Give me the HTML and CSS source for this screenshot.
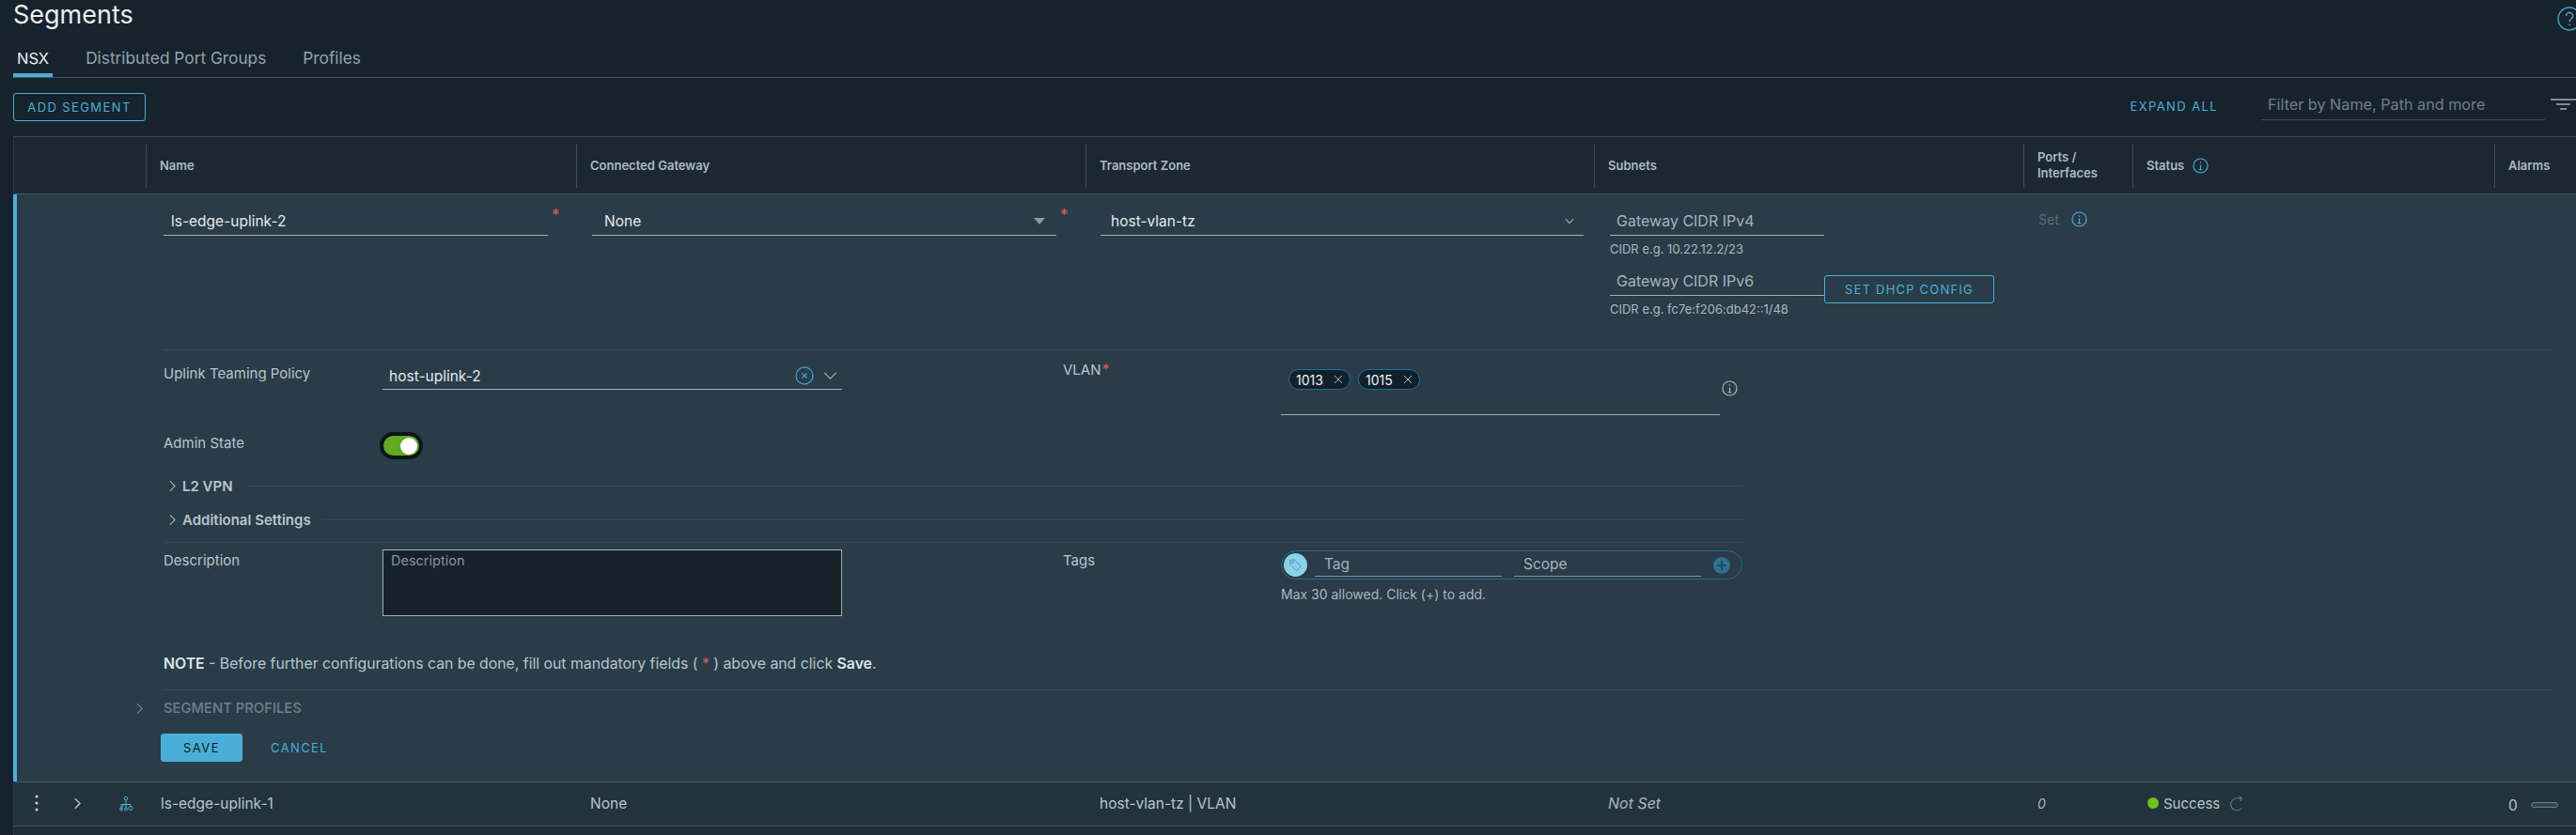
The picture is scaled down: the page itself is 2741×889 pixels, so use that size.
FILE: index.html
```html
<!DOCTYPE html>
<html lang="en">
<head>
  <meta charset="UTF-8" />
  <title>Segments</title>
  <link rel="stylesheet" href="styles.css">
</head>
<body>
  <div class="page-head">
    <h1>Segments</h1>
    <svg class="help-icon" viewBox="0 0 26 26"><circle cx="13" cy="13" r="12"/><path d="M9.5 10a3.6 3.6 0 1 1 5.6 3c-1.4.9-2.1 1.5-2.1 3.2M13 18.5v1.8"/></svg>
  </div>

  <nav class="tabs">
    <a class="tab active">NSX</a>
    <a class="tab">Distributed Port Groups</a>
    <a class="tab">Profiles</a>
  </nav>

  <div class="toolbar">
    <button class="btn btn-outline">ADD SEGMENT</button>
    <a class="link-btn expand">EXPAND ALL</a>
    <div class="filter">Filter by Name, Path and more</div>
    <svg class="filter-icon" viewBox="0 0 27 12"><path d="M0 1h27M6 6h15M10 11h7"/></svg>
  </div>

  <div class="grid-table">
    <div class="cols head">
      <div class="cell"></div>
      <div class="cell">Name</div>
      <div class="cell">Connected Gateway</div>
      <div class="cell">Transport Zone</div>
      <div class="cell">Subnets</div>
      <div class="cell">Ports /<br>Interfaces</div>
      <div class="cell">Status
        <svg class="info blue" viewBox="0 0 18 18"><circle cx="9" cy="9" r="8"/><path d="M9 8v5M7 13.5h4M9 4.5V6"/></svg>
      </div>
      <div class="cell">Alarms</div>
    </div>

    <div class="edit-row">
      <section class="edit-top">
        <div class="top-cell">
          <div class="field name-field"><span class="value">ls-edge-uplink-2</span></div>
          <span class="req">*</span>
        </div>
        <div class="top-cell">
          <div class="field gateway-field"><span class="value">None</span><i class="caret"></i></div>
          <span class="req">*</span>
        </div>
        <div class="top-cell">
          <div class="field zone-field"><span class="value">host-vlan-tz</span>
            <svg class="chev-down" viewBox="0 0 12 8"><path d="M1 1l5 5.5L11 1"/></svg>
          </div>
        </div>
        <div class="subnets">
          <div class="field cidr-field"><span class="placeholder">Gateway CIDR IPv4</span></div>
          <p class="help">CIDR e.g. 10.22.12.2/23</p>
          <div class="cidr-row">
            <div class="field cidr-field"><span class="placeholder">Gateway CIDR IPv6</span></div>
            <button class="btn btn-outline btn-dhcp">SET DHCP CONFIG</button>
          </div>
          <p class="help">CIDR e.g. fc7e:f206:db42::1/48</p>
        </div>
        <div class="ports">
          <span class="muted">Set</span>
          <svg class="info blue" viewBox="0 0 18 18"><circle cx="9" cy="9" r="8"/><path d="M9 8v5M7 13.5h4M9 4.5V6"/></svg>
        </div>
      </section>

      <section class="edit-form">
        <div class="form-row uplink-row">
          <label class="form-label">Uplink Teaming Policy</label>
          <div class="field policy-field"><span class="value">host-uplink-2</span>
            <svg class="clear-icon" viewBox="0 0 20 20"><circle cx="10" cy="10" r="9"/><path d="M7.5 7.5l5 5M12.5 7.5l-5 5"/></svg>
            <svg class="chev-down wide" viewBox="0 0 16 9"><path d="M1 1l7 7 7-7"/></svg>
          </div>
          <label class="form-label vlan-label">VLAN<span class="req inline">*</span></label>
          <div class="vlan-box">
            <div class="chips">
              <span class="chip">1013<svg viewBox="0 0 10 10"><path d="M1 1l8 8M9 1l-8 8"/></svg></span>
              <span class="chip">1015<svg viewBox="0 0 10 10"><path d="M1 1l8 8M9 1l-8 8"/></svg></span>
            </div>
            <svg class="info grey" viewBox="0 0 18 18"><circle cx="9" cy="9" r="8"/><path d="M9 8v5M7 13.5h4M9 4.5V6"/></svg>
          </div>
        </div>

        <div class="form-row admin-row">
          <label class="form-label">Admin State</label>
          <div class="toggle"><i></i></div>
        </div>

        <div class="collapse-row first">
          <svg class="chev-right" viewBox="0 0 8 14"><path d="M1 1l6 6-6 6"/></svg>
          <span>L2 VPN</span><i></i>
        </div>
        <div class="collapse-row">
          <svg class="chev-right" viewBox="0 0 8 14"><path d="M1 1l6 6-6 6"/></svg>
          <span>Additional Settings</span><i></i>
        </div>

        <div class="form-row desc-row">
          <label class="form-label">Description</label>
          <div class="textarea">Description</div>
          <label class="form-label">Tags</label>
          <div>
            <div class="tag-pill">
              <span class="tag-circle">
                <svg viewBox="0 0 16 16"><path d="M2 2.5l5-.5 7 7.5-5 5-7-7z"/><circle cx="5" cy="5" r="1"/></svg>
              </span>
              <div class="tag-input">Tag</div>
              <div class="tag-input">Scope</div>
              <span class="tag-add">
                <svg viewBox="0 0 10 10"><path d="M5 0v10M0 5h10"/></svg>
              </span>
            </div>
            <p class="help tag-help">Max 30 allowed. Click (+) to add.</p>
          </div>
        </div>
      </section>

      <p class="note"><b>NOTE</b> - Before further configurations can be done, fill out mandatory fields ( <span class="req-dot">*</span> ) above and click <b>Save</b>.</p>

      <div class="profiles">
        <svg class="chev-right dim" viewBox="0 0 8 14"><path d="M1 1l6 6-6 6"/></svg>
        <span>SEGMENT PROFILES</span>
      </div>

      <div class="actions">
        <button class="btn btn-solid">SAVE</button>
        <a class="link-btn">CANCEL</a>
      </div>
    </div>

    <div class="cols data">
      <div class="cell row-tools">
        <svg class="kebab" viewBox="0 0 4 18"><circle cx="2" cy="2" r="1.5"/><circle cx="2" cy="9" r="1.5"/><circle cx="2" cy="16" r="1.5"/></svg>
        <svg class="chev-right" viewBox="0 0 8 14"><path d="M1 1l6 6-6 6"/></svg>
        <svg class="segment-icon" viewBox="0 0 16 16"><circle cx="8" cy="2.5" r="1.8"/><path d="M8 4.5V8M3 14V9h10v2M6 8l-3 6M8 8v6"/><circle cx="3" cy="14" r="1.5"/><circle cx="8" cy="14" r="1.5"/><circle cx="13" cy="13" r="2"/></svg>
      </div>
      <div class="cell name-cell">ls-edge-uplink-1</div>
      <div class="cell">None</div>
      <div class="cell">host-vlan-tz | VLAN</div>
      <div class="cell"><em class="not-set">Not Set</em></div>
      <div class="cell"><em>0</em></div>
      <div class="cell status-cell">
        <i class="dot"></i>Success
        <svg class="refresh" viewBox="0 0 16 18"><path d="M13 14.5A7 7 0 1 1 9 3h4M10.5.5L13 3l-1 3.5"/></svg>
      </div>
      <div class="cell alarm-cell"><span>0</span><i class="alarm-bar"></i></div>
    </div>
    <div class="table-rest"></div>
  </div>
</body>
</html>
```

FILE: styles.css
```css
html, body {
  margin: 0;
  height: 889px;
  overflow: hidden;
}
body {
  width: 2741px;
  background: #17232c;
  color: #c5d0d7;
  font-family: Inter, "Liberation Sans", sans-serif;
  font-size: 14px;
}
p { margin: 0; }
svg { fill: none; stroke: currentColor; display: block; flex: none; }

.page-head {
  height: 48px;
  padding-left: 14px;
  display: flex;
  justify-content: space-between;
}
h1 {
  margin: 0;
  font-size: 27px;
  line-height: 32px;
  font-weight: 400;
  color: #e9eef0;
}
.help-icon {
  width: 26px;
  height: 26px;
  margin: 7px -6px 0 0;
  color: #3d9fcb;
  stroke-width: 1.5;
}

.tabs {
  display: flex;
  gap: 39px;
  height: 34px;
  margin-left: 14px;
  padding-left: 4px;
  border-bottom: 1px solid #44545f;
}
.tab {
  line-height: 28px;
  font-size: 17.3px;
  color: #93a4af;
}
.tab.active {
  color: #e9eef0;
  position: relative;
  font-size: 16.5px;
}
.tab.active::after {
  content: "";
  position: absolute;
  left: -4px;
  right: -4px;
  bottom: 0;
  height: 4px;
  background: #49afd9;
}

.toolbar {
  height: 62px;
  padding-left: 14px;
  display: flex;
  align-items: center;
  box-sizing: border-box;
}
.btn {
  font-family: inherit;
  font-size: 13px;
  letter-spacing: 1.4px;
  border-radius: 3px;
  padding: 0;
}
.btn-outline {
  width: 141px;
  height: 30px;
  margin-top: -1px;
  background: transparent;
  border: 1px solid #49afd9;
  color: #49afd9;
}
.link-btn {
  color: #49afd9;
  font-size: 13px;
  letter-spacing: 1.4px;
}
.expand { margin-left: auto; margin-top: -3px; }
.filter {
  width: 295px;
  margin-left: 46px;
  padding: 0 0 6px 7px;
  border-bottom: 1px solid #3b4953;
  color: #6f7f8a;
  font-size: 16.2px;
  line-height: 20px;
}
.filter-icon {
  width: 27px;
  height: 12px;
  margin: -6px 0 0 6px;
  color: #7d8b94;
  stroke-width: 2;
}

.grid-table {
  margin-left: 14px;
  width: 2760px;
  border-top: 1px solid #3a4953;
  border-left: 1px solid #2e3c46;
}
.cols {
  display: grid;
  grid-template-columns: 140px 458px 542px 541px 457px 116px 385px 1fr;
}
.head {
  height: 60px;
  background: #1b2832;
  border-bottom: 1px solid #4a5b67;
  align-items: center;
  font-size: 13px;
  font-weight: 600;
  color: #acbac3;
}
.head .cell {
  height: 47px;
  padding-left: 14px;
  border-left: 1px solid #3f4e59;
  display: flex;
  align-items: center;
  gap: 9px;
  line-height: 17px;
  box-sizing: border-box;
}
.head .cell:first-child { border-left: 0; }
.info {
  width: 17px;
  height: 19px;
  stroke-width: 1.2;
}
.info.blue { color: #49afd9; }
.info.grey { color: #adbbc4; }

.edit-row {
  height: 625px;
  background: #293c48;
  border-left: 4px solid #49afd9;
  margin-left: -1px;
  padding-left: 156px;
  box-sizing: border-box;
}
.edit-top {
  width: 2543px;
  height: 165px;
  display: grid;
  grid-template-columns: 456px 541px 542px 456px 1fr;
  border-bottom: 1px solid #344855;
}
.top-cell {
  display: flex;
  align-items: flex-start;
  padding-top: 19px;
}
.field {
  height: 18px;
  padding-bottom: 6px;
  border-bottom: 1px solid #9fb0ba;
  display: flex;
  align-items: center;
  font-size: 15.5px;
}
.value {
  color: #e3e9ec;
  padding-left: 8px;
}
.placeholder {
  color: #a5b3bb;
  padding-left: 7px;
  font-size: 16px;
}
.req {
  color: #e05a55;
  font-size: 17px;
  line-height: 16px;
  margin: -5px 0 0 4px;
}
.name-field { width: 409px; }
.gateway-field { width: 489px; padding-left: 5px; }
.caret {
  margin-left: auto;
  margin-right: 12px;
  border: 6px solid transparent;
  border-top: 7px solid #8d9aa2;
  border-bottom: 0;
}
.zone-field { width: 511px; padding-left: 3px; }
.chev-down {
  width: 10px;
  height: 7px;
  margin-left: auto;
  margin-right: 10px;
  color: #a5b3bb;
  stroke-width: 1.3;
}
.subnets { padding-top: 19px; }
.cidr-field { width: 228px; }
.help {
  font-size: 13px;
  line-height: 18px;
  color: #a9b7c0;
}
.subnets .help { margin-top: 5px; }
.cidr-row {
  display: flex;
  align-items: flex-end;
  margin-top: 16px;
  height: 25px;
}
.btn-dhcp {
  width: 181px;
  height: 30px;
  margin: 0 0 -8px 0;
  letter-spacing: 1.2px;
}
.subnets .cidr-row + .help { margin-top: 5px; }
.ports {
  display: flex;
  gap: 13px;
  padding-top: 16px;
  height: 20px;
  align-items: center;
}
.muted { color: #5b6e7a; }

.edit-form { width: 1680px; }
.form-row {
  display: grid;
  grid-template-columns: 233px 724px 232px 491px;
}
.form-label {
  color: #b8c5cc;
  font-size: 15px;
  line-height: 18px;
}
.uplink-row {
  height: 72px;
  padding-top: 16px;
  box-sizing: border-box;
}
.policy-field {
  width: 489px;
  height: 22px;
  padding-bottom: 3px;
}
.policy-field .value { padding-left: 7px; }
.clear-icon {
  width: 20px;
  height: 20px;
  margin-left: auto;
  color: #3d9fcb;
  stroke-width: 1.3;
}
.chev-down.wide {
  width: 15px;
  height: 8px;
  margin: 0 5px 0 10px;
}
.vlan-label { margin-top: -4px; }
.req.inline {
  margin: 0 0 0 1px;
  font-size: 16px;
  line-height: 10px;
}
.vlan-box {
  width: 467px;
  height: 53px;
  border-bottom: 1px solid #9fb0ba;
  display: flex;
  box-sizing: border-box;
  position: relative;
}
.chips {
  display: flex;
  gap: 8px;
  padding: 4px 0 0 8px;
  align-items: flex-start;
}
.chip {
  width: 66px;
  height: 22px;
  padding: 0 7px;
  display: flex;
  align-items: center;
  justify-content: space-between;
  box-sizing: border-box;
  background: #12202b;
  border: 1.5px solid #1670a3;
  border-radius: 11px;
  color: #eef2f4;
  font-size: 14px;
}
.chip svg {
  width: 10px;
  height: 10px;
  color: #a5b9c5;
}
.vlan-box .info {
  position: absolute;
  left: 469px;
  top: 15px;
}

.admin-row {
  height: 64px;
  padding-top: 18px;
  box-sizing: border-box;
}
.toggle {
  width: 38px;
  height: 21px;
  margin: -3px 0 0 -3px;
  background: #60ab21;
  border: 4px solid #0d1518;
  border-radius: 15px;
  display: flex;
  justify-content: flex-end;
  align-items: center;
}
.toggle i {
  width: 18px;
  height: 18px;
  margin-right: 2px;
  background: #fff;
  border-radius: 50%;
}
.collapse-row {
  height: 36px;
  display: flex;
  align-items: center;
  padding-left: 6px;
  gap: 7px;
  color: #b8c5cc;
  font-weight: 600;
  font-size: 15px;
}
.collapse-row.first { height: 35px; margin-top: -9px; }
.collapse-row + .collapse-row { margin-bottom: 22px; }
.collapse-row i {
  flex: 1;
  height: 1px;
  margin-left: 6px;
  background: #344855;
}
.chev-right {
  width: 7px;
  height: 13px;
  color: #b8c5cc;
  stroke-width: 1.2;
}
.desc-row {
  border-top: 1px solid #344855;
  margin-top: -16px;
  padding-top: 7px;
}
.desc-row .form-label { margin-top: 3px; }
.textarea {
  width: 489px;
  height: 71px;
  box-sizing: border-box;
  padding: 2px 8px;
  background: #16222a;
  border: 1px solid #a0afb8;
  color: #84949e;
  font-size: 14.5px;
}
.tag-pill {
  width: 491px;
  height: 31px;
  margin-top: 1px;
  padding: 0 8px 0 2px;
  display: flex;
  align-items: center;
  box-sizing: border-box;
  border: 1px solid #2e6785;
  border-radius: 16px;
}
.tag-circle {
  width: 25px;
  height: 25px;
  margin-right: 8px;
  border-radius: 50%;
  background: #89d3e8;
  display: flex;
  align-items: center;
  justify-content: center;
  color: #4d93ad;
}
.tag-circle svg { width: 15px; height: 15px; }
.tag-input {
  width: 199px;
  height: 24px;
  margin-right: 13px;
  padding-left: 10px;
  box-sizing: border-box;
  border-bottom: 1px solid #8494a0;
  color: #a5b3bb;
  font-size: 15.5px;
  line-height: 21px;
}
.tag-add {
  width: 18px;
  height: 18px;
  border-radius: 50%;
  background: #2e7091;
  display: flex;
  align-items: center;
  justify-content: center;
  color: #234a5e;
}
.tag-add svg { width: 10px; height: 10px; stroke-width: 2; }
.tag-help { margin-top: 7px; font-size: 14px; }

.note {
  width: 2543px;
  margin-top: 42px;
  padding-bottom: 18px;
  border-bottom: 1px solid #344855;
  line-height: 18px;
  font-size: 15.8px;
  color: #b8c5cc;
}
.note b { color: #dde4e8; font-weight: 600; }
.req-dot { color: #e05a55; }
.profiles {
  display: flex;
  align-items: center;
  height: 30px;
  margin-top: 4px;
  margin-left: -29px;
  gap: 22px;
  color: #6d808c;
  font-size: 14.8px;
  font-weight: 500;
}
.chev-right.dim { color: #7f919d; }
.actions {
  display: flex;
  align-items: center;
  gap: 30px;
  margin: 12px 0 0 -3px;
}
.btn-solid {
  width: 87px;
  height: 30px;
  background: #49afd9;
  border: 1px solid #49afd9;
  color: #0b1a22;
}

.data {
  height: 48px;
  background: #22333b;
  border-top: 1px solid #4a5b67;
  border-bottom: 1px solid #3f4e59;
  align-items: center;
  box-sizing: border-box;
  color: #b8c5cc;
  font-size: 15.5px;
}
.data .cell { padding-left: 15px; margin-top: -2px; }
.data .name-cell { padding-left: 16px; }
.data em { font-style: italic; color: #a9b7c0; font-size: 14px; }
.data em.not-set { font-size: 16px; }
.row-tools {
  display: flex;
  align-items: center;
  padding-left: 22px !important;
}
.kebab {
  width: 4px;
  height: 18px;
  fill: #c5d0d7;
  stroke: none;
}
.row-tools .chev-right { margin-left: 38px; stroke-width: 1.6; }
.segment-icon {
  width: 16px;
  height: 17px;
  margin-left: 40px;
  color: #49afd9;
}
.status-cell {
  display: flex;
  align-items: center;
  gap: 5px;
  font-size: 15px;
}
.data .status-cell { padding-left: 16px; }
.dot {
  width: 12px;
  height: 12px;
  border-radius: 50%;
  background: #6fc11c;
}
.refresh {
  width: 15px;
  height: 17px;
  margin-left: 6px;
  color: #3686aa;
  stroke-width: 1.2;
}
.alarm-cell {
  display: flex;
  align-items: center;
  gap: 14px;
}
.data .alarm-cell { margin-top: 2px; }
.alarm-bar {
  width: 29px;
  height: 6px;
  border: 1px solid #6d7f8a;
  border-radius: 3px;
  background: #33464f;
  box-sizing: border-box;
}
.table-rest {
  height: 20px;
  background: #1e2d36;
}
```
